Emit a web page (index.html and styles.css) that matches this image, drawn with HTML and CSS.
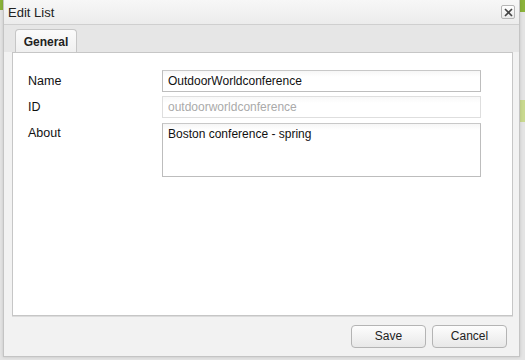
FILE: index.html
```html
<!DOCTYPE html>
<html lang="en">
<head>
  <meta charset="UTF-8">
  <title>Edit List</title>
  <link rel="stylesheet" href="styles.css">
</head>
<body>
  <div class="page-bg">
    <span class="bg-strip top-left"></span>
    <span class="bg-strip top-right"></span>
    <span class="bg-strip mid-right"></span>
  </div>
  <div class="dialog">
    <div class="title-bar">
      <span class="title">Edit List</span>
      <button class="close" aria-label="Close">
        <svg width="9" height="9" viewBox="0 0 9 9"><path d="M1 1L8 8M8 1L1 8" stroke="#444" stroke-width="1.6"/></svg>
      </button>
    </div>
    <div class="tabs">
      <div class="tab active">General</div>
    </div>
    <div class="panel">
      <div class="form">
        <label class="label">Name</label>
        <input class="field" type="text" value="OutdoorWorldconference">
        <label class="label">ID</label>
        <input class="field disabled" type="text" value="outdoorworldconference" disabled>
        <label class="label">About</label>
        <textarea class="field area">Boston conference - spring</textarea>
      </div>
    </div>
    <div class="footer">
      <button class="btn">Save</button>
      <button class="btn">Cancel</button>
    </div>
  </div>
</body>
</html>
```

FILE: styles.css
```css
body {
  margin: 0;
  padding: 0;
  font-family: "Liberation Sans", Arial, sans-serif;
  font-size: 12px;
  color: #111;
  background-color: #e4e4e4;
  width: 525px;
  height: 360px;
  overflow: hidden;
  position: relative;
}
.page-bg {
  position: absolute;
  inset: 0;
}
.bg-strip {
  position: absolute;
  width: 6px;
}
.top-left {
  left: 0;
  top: 0;
  height: 10px;
  background-color: #8bb33a;
}
.top-right {
  right: 0;
  top: 0;
  height: 12px;
  background-color: #8bb33a;
}
.mid-right {
  right: 0;
  top: 100px;
  height: 22px;
  background-color: #c9d98f;
}
.dialog {
  position: absolute;
  left: 3px;
  top: 0;
  width: 515px;
  height: 356px;
  border: 1px solid #c4c4c4;
  border-top: none;
  background-color: #f2f2f2;
  display: flex;
  flex-direction: column;
  box-shadow: 0 0 3px rgba(0, 0, 0, 0.15);
}
.title-bar {
  height: 24px;
  display: flex;
  align-items: center;
  justify-content: space-between;
  padding: 0 4px 0 4px;
  background: linear-gradient(#f7f7f7, #ececec);
  border-bottom: 1px solid #cfcfcf;
}
.title {
  font-size: 13px;
  color: #222;
}
.close {
  width: 14px;
  height: 14px;
  padding: 0;
  border: 1px solid #b5b5b5;
  border-radius: 2px;
  background: linear-gradient(#fff, #e9e9e9);
  display: flex;
  align-items: center;
  justify-content: center;
}
.tabs {
  height: 27px;
  background-color: #e6e6e6;
  padding: 0 8px;
  display: flex;
  align-items: flex-end;
}
.tab {
  height: 24px;
  width: 62px;
  box-sizing: border-box;
  display: flex;
  align-items: center;
  justify-content: center;
  font-weight: bold;
  font-size: 12px;
  color: #222;
  border: 1px solid #c6c6c6;
  border-bottom: none;
  border-radius: 4px 4px 0 0;
  background: linear-gradient(#fbfbfb, #efefef);
  margin-left: 3px;
  margin-bottom: -1px;
}
.panel {
  margin: 0 6px 0 8px;
  height: 262px;
  background-color: #fff;
  border: 1px solid #c6c6c6;
  box-shadow: 0 1px 0 #dcdcdc;
}
.form {
  display: grid;
  grid-template-columns: 134px 319px;
  row-gap: 4px;
  padding: 17px 0 0 15px;
  align-items: start;
}
.label {
  font-size: 12.5px;
  line-height: 22px;
  color: #111;
}
.field {
  box-sizing: border-box;
  width: 319px;
  height: 22px;
  margin: 0;
  padding: 0 5px;
  font-family: "Liberation Sans", Arial, sans-serif;
  font-size: 12px;
  color: #111;
  border: 1px solid #bdbdbd;
  border-top-color: #c8c8c8;
  background: linear-gradient(#f6f6f6, #fff 6px);
  outline: none;
}
.field.disabled {
  color: #aaa;
  border-color: #dedede;
  background: linear-gradient(#f8f8f8, #fff 6px);
}
.field.area {
  height: 54px;
  margin-top: 1px;
  padding: 3px 5px;
  resize: none;
  line-height: 15px;
}
.footer {
  flex: 1;
  display: flex;
  justify-content: flex-end;
  align-items: center;
  gap: 6px;
  padding: 0 12px 0 0;
}
.btn {
  width: 75px;
  height: 23px;
  font-family: "Liberation Sans", Arial, sans-serif;
  font-size: 12px;
  color: #222;
  border: 1px solid #b4b4b4;
  border-radius: 4px;
  background: linear-gradient(#fdfdfd, #e8e8e8);
  cursor: pointer;
}
```
